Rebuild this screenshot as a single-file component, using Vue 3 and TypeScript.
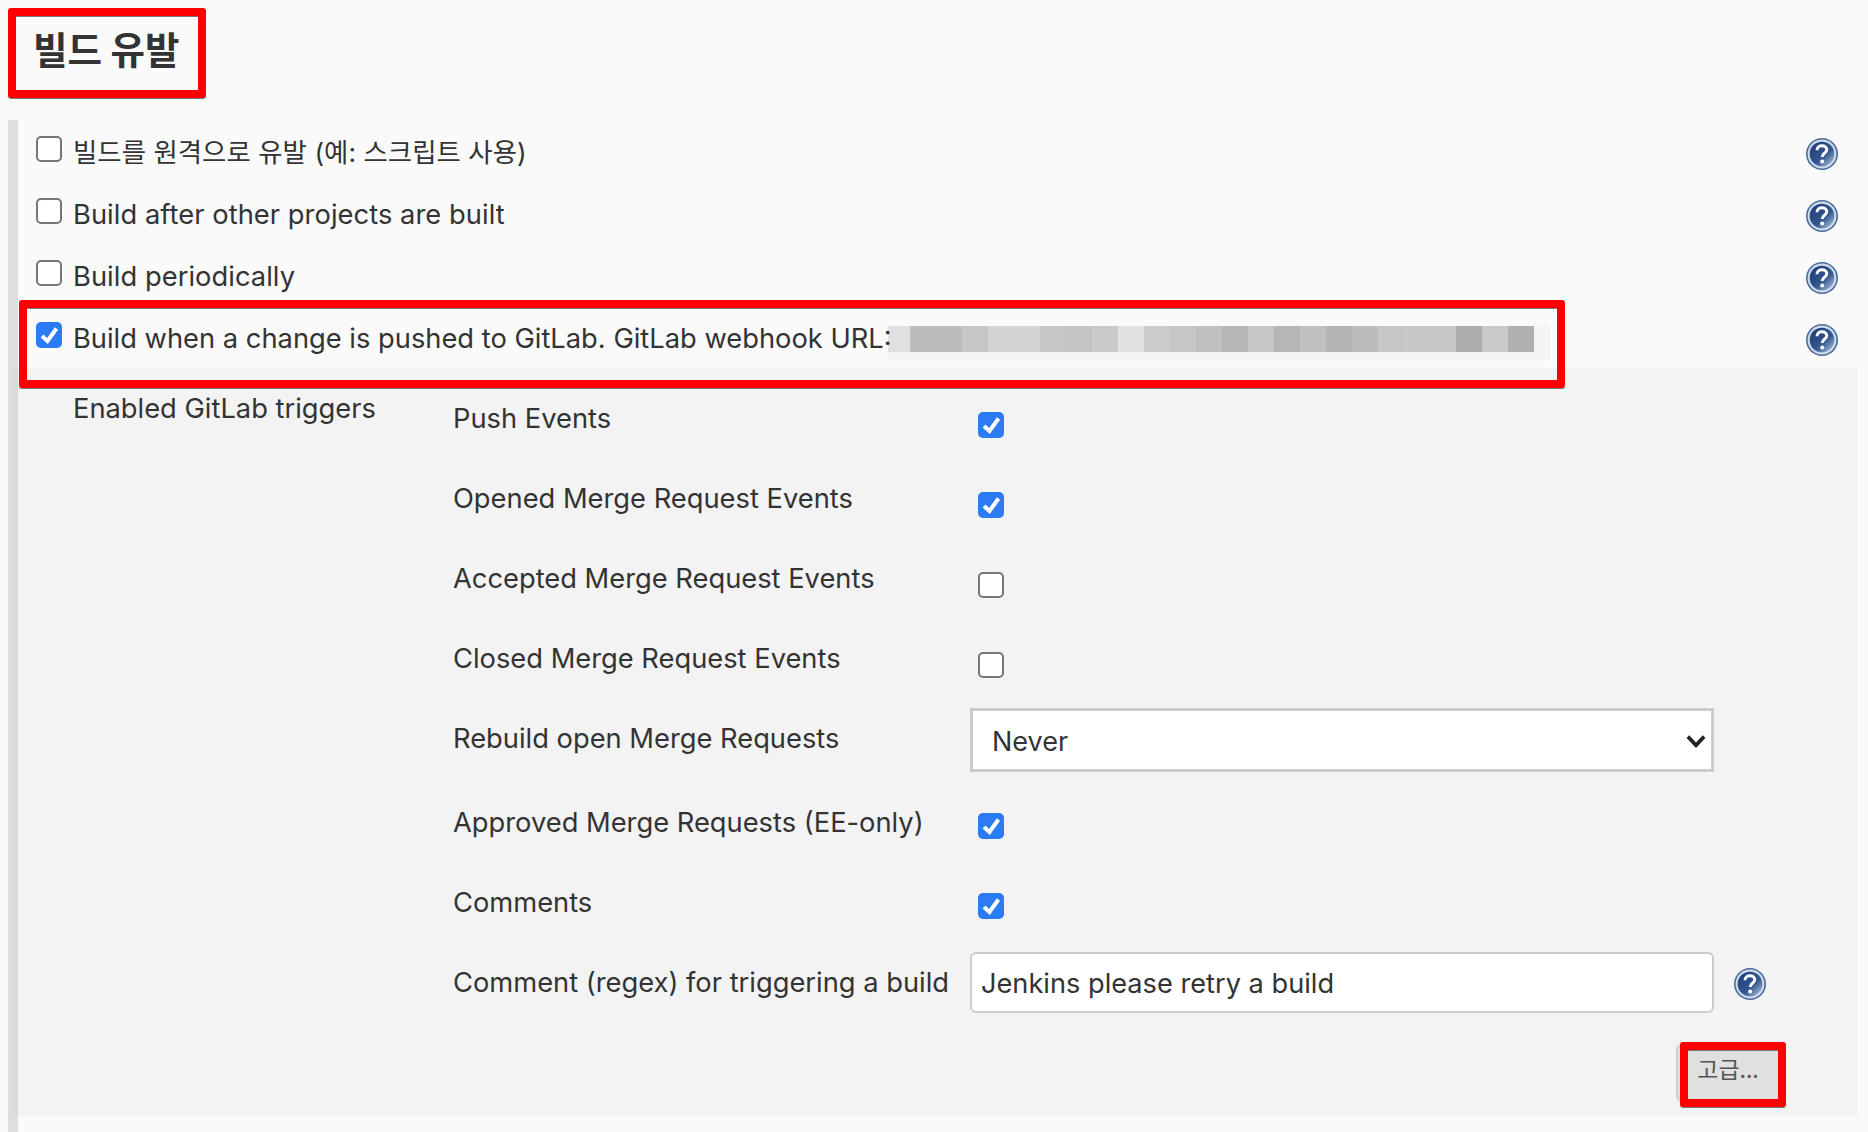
<script setup lang="ts">
const topRows = [
  { text: '빌드를 원격으로 유발 (예: 스크립트 사용)', ko: true },
  { text: 'Build after other projects are built', ko: false },
  { text: 'Build periodically', ko: false },
]
const blur = ['#e0e0e0','#bcbcbc','#bcbcbc','#c6c6c6','#d4d4d4','#d4d4d4','#c6c6c6','#c4c4c4','#cacaca','#e2e2e2','#cccccc','#c6c6c6','#c0c0c0','#b6b6b6','#c6c6c6','#b6b6b6','#c0c0c0','#b4b4b4','#bcbcbc','#c6c6c6','#c8c8c8','#c6c6c6','#aeaeae','#cacaca','#b0b0b0']
const triggers = [
  { text: 'Push Events', cls: 'r80', checked: true },
  { text: 'Opened Merge Request Events', cls: 'r80', checked: true },
  { text: 'Accepted Merge Request Events', cls: 'r80', checked: false },
  { text: 'Closed Merge Request Events', cls: 'r66', checked: false },
]
</script>

<template>
  <main class="page">
    <header class="head">
      <h2 class="title">빌드 유발</h2>
      <i class="mark mark-title"></i>
    </header>

    <section class="section">
      <div v-for="r in topRows" :key="r.text" class="row">
        <span class="box"></span>
        <label class="label" :class="{ ko: r.ko }">{{ r.text }}</label>
        <svg class="help" viewBox="0 0 32 32"><use href="#help-icon" /></svg>
      </div>

      <div class="row row-last">
        <span class="box on"><svg viewBox="0 0 26 26"><path d="M6 14l5.5 5L20.5 6.5" /></svg></span>
        <label class="label label-url">Build when a change is pushed to GitLab. GitLab webhook URL:</label>
        <div class="strip">
          <div class="cells">
            <span v-for="(c, i) in blur" :key="i" class="cell" :class="{ first: i === 0 }" :style="{ background: c }"></span>
          </div>
        </div>
        <svg class="help" viewBox="0 0 32 32"><use href="#help-icon" /></svg>
        <i class="mark mark-row"></i>
      </div>

      <div class="panel">
        <div class="panel-title">Enabled GitLab triggers</div>
        <div class="grid">
          <template v-for="t in triggers" :key="t.text">
            <div class="name" :class="t.cls">{{ t.text }}</div>
            <div class="val" :class="t.cls">
              <span class="box inner" :class="{ on: t.checked }"><svg v-if="t.checked" viewBox="0 0 26 26"><path d="M6 14l5.5 5L20.5 6.5" /></svg></span>
            </div>
            <div :class="t.cls"></div>
          </template>

          <div class="name r98 shift">Rebuild open Merge Requests</div>
          <div class="val r98 ctl">
            <div class="select-wrap">
              <select class="select"><option>Never</option></select>
              <svg class="chev" viewBox="0 0 18 12"><path d="M1.5 1.5l7.5 8 7.5-8" /></svg>
            </div>
          </div>
          <div class="r98"></div>

          <div class="name r80">Approved Merge Requests (EE-only)</div>
          <div class="val r80 low">
            <span class="box inner on"><svg viewBox="0 0 26 26"><path d="M6 14l5.5 5L20.5 6.5" /></svg></span>
          </div>
          <div class="r80"></div>

          <div class="name r66">Comments</div>
          <div class="val r66 low">
            <span class="box inner on"><svg viewBox="0 0 26 26"><path d="M6 14l5.5 5L20.5 6.5" /></svg></span>
          </div>
          <div class="r66"></div>

          <div class="name r61 shift">Comment (regex) for triggering a build</div>
          <div class="val r61 ctl">
            <input class="input" type="text" value="Jenkins please retry a build" />
          </div>
          <div class="r61 help-cell">
            <svg class="help" viewBox="0 0 32 32"><use href="#help-icon" /></svg>
          </div>
        </div>

        <div class="actions">
          <button class="adv" type="button">고급...</button>
          <i class="mark mark-btn"></i>
        </div>
      </div>
    </section>

    <svg class="defs" width="0" height="0" aria-hidden="true">
      <defs>
        <linearGradient id="help-fill" x1="0.15" y1="0.1" x2="0.9" y2="0.9">
          <stop offset="0" stop-color="#1f3f7c" />
          <stop offset="0.6" stop-color="#34588f" />
          <stop offset="1" stop-color="#9db4d2" />
        </linearGradient>
        <symbol id="help-icon" viewBox="0 0 32 32">
          <circle cx="16" cy="16" r="16" fill="#4a6b9e" />
          <circle cx="16" cy="16" r="14.4" fill="#cfdae8" />
          <circle cx="16" cy="16" r="12.3" fill="url(#help-fill)" />
          <path d="M11 12.2c0-2.9 2.3-4.5 5-4.5s4.8 1.6 4.8 4c0 3.5-4.6 3.6-4.6 7.2" fill="none" stroke="#fff" stroke-width="2.9" />
          <circle cx="16.2" cy="23.6" r="2" fill="#fff" />
        </symbol>
      </defs>
    </svg>
  </main>
</template>

<style>
html, body { margin: 0; background: #fafafa; }
</style>

<style scoped>
.page {
  width: 1868px;
  height: 1132px;
  background: #fafafa;
  color: #333;
  font-family: "Inter", "Noto Sans CJK KR", sans-serif;
  font-size: 27.3px;
  overflow: hidden;
}
.defs { position: absolute; }
.head { position: relative; height: 120px; }
.title {
  margin: 0;
  padding: 25px 0 0 33px;
  font-family: "Noto Sans CJK KR", sans-serif;
  font-size: 37.5px;
  line-height: 46px;
  font-weight: 700;
  letter-spacing: 0;
}
.mark {
  position: absolute;
  z-index: 2;
  box-sizing: border-box;
  border: 8px solid #f00;
  border-radius: 3px;
  box-shadow: 0 1px 0 #777, inset 0 1px 0 #777;
  pointer-events: none;
}
.mark-title { left: 8px; top: 8px; width: 198px; height: 90px; }
.section {
  position: relative;
  margin: 0 10px 0 8px;
  border-left: 10px solid #dedede;
  padding-top: 10px;
  height: 1002px;
}
.row {
  position: relative;
  display: flex;
  align-items: flex-start;
  height: 62px;
  padding: 0 20px 0 18px;
}
.row-last { height: 52px; }
.box {
  flex: none;
  box-sizing: border-box;
  width: 26px;
  height: 26px;
  margin-top: 6px;
  background: #fff;
  border: 2px solid #767676;
  border-radius: 5px;
}
.box.on { background: #2b7bf5; border: 0; }
.box svg { display: block; width: 26px; height: 26px; }
.box path { fill: none; stroke: #fff; stroke-width: 4; }
.label { margin-left: 11px; line-height: 34px; margin-top: 6px; white-space: nowrap; letter-spacing: 0.05px; }
.ko { font-size: 26.4px; margin-top: 5px; }
.label-url { position: relative; z-index: 1; flex: 0 0 815px; width: 815px; letter-spacing: 0; }
.strip { flex: none; margin-top: 10px; width: 662px; height: 35px; background: #f5f5f5; }
.cells { display: flex; height: 26px; }
.cell { flex: none; width: 26px; height: 26px; }
.cell.first { width: 22px; }
.help { flex: none; display: block; width: 32px; height: 32px; margin-left: auto; margin-top: 8px; }
.mark-row { left: 1px; top: -16px; width: 1546px; height: 88px; }
.panel {
  position: relative;
  margin-left: -6px;
  border-left: 6px solid #dadada;
  background: #f3f3f3;
  height: 748px;
  display: flex;
  flex-wrap: wrap;
  align-content: flex-start;
}
.panel-title { flex: 0 0 436px; width: 380px; padding: 25px 0 0 55px; box-sizing: border-box; line-height: 32px; white-space: nowrap; }
.grid {
  flex: none;
  margin-top: 34px;
  display: grid;
  grid-template-columns: 516px 744px 80px;
}
.name { line-height: 32px; white-space: nowrap; margin-left: -1px; padding-top: 1px; box-sizing: border-box; }
.name.shift { padding-top: 15px; }
.r80 { height: 80px; }
.r66 { height: 66px; }
.r98 { height: 98px; }
.r61 { height: 61px; }
.val { padding-left: 8px; box-sizing: border-box; }
.val.ctl { padding-left: 0; }
.inner { display: block; margin-top: 10px; }
.low .inner { margin-top: 7px; }
.select-wrap { position: relative; height: 64px; }
.select {
  appearance: none;
  box-sizing: border-box;
  width: 100%;
  height: 64px;
  padding: 2px 19px 0;
  background: #fff;
  border: 3px solid #ccc;
  border-radius: 0;
  color: #333;
  font: inherit;
  font-size: 27px;
}
.chev { position: absolute; right: 8px; top: 27px; width: 20px; height: 13px; }
.chev path { fill: none; stroke: #222; stroke-width: 3.4; }
.input {
  box-sizing: border-box;
  width: 100%;
  height: 61px;
  padding: 2px 9px 0;
  background: #fff;
  border: 2px solid #ccc;
  border-radius: 6px;
  color: #333;
  font: inherit;
  font-size: 27.2px;
}
.help-cell { padding-left: 20px; }
.help-cell .help { margin: 16px 0 0; }
.actions { position: relative; flex: 0 0 100%; height: 0; }
.adv {
  position: absolute;
  left: 1658px;
  top: 31px;
  box-sizing: border-box;
  width: 104px;
  height: 58px;
  padding: 0 0 10px 0;
  background: #e0e0e0;
  border: 2px solid #ccc;
  border-radius: 6px;
  color: #555;
  font-family: "Noto Sans CJK KR", sans-serif;
  font-size: 23px;
  letter-spacing: 0;
}
.mark-btn { left: 1662px; top: 29px; width: 106px; height: 65px; }
</style>
